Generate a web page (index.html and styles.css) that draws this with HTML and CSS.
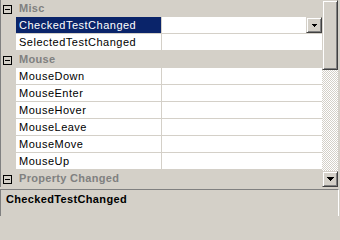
FILE: index.html
```html
<!DOCTYPE html>
<html>
<head>
<meta charset="utf-8">
<link rel="stylesheet" href="styles.css">
</head>
<body>
<div class="pane">
  <div class="grid">
    <div class="rows">
      <div class="cat"><span class="box"><span class="minus"></span></span><span class="cat-label">Misc</span></div>
      <div class="row sel"><div class="name">CheckedTestChanged</div><div class="value"><span class="ddbtn"><svg width="5" height="3" viewBox="0 0 5 3" shape-rendering="crispEdges"><rect x="0" y="0" width="5" height="1" fill="#000"/><rect x="1" y="1" width="3" height="1" fill="#000"/><rect x="2" y="2" width="1" height="1" fill="#000"/></svg></span></div></div>
      <div class="row"><div class="name">SelectedTestChanged</div><div class="value"></div></div>
      <div class="cat"><span class="box"><span class="minus"></span></span><span class="cat-label">Mouse</span></div>
      <div class="row"><div class="name">MouseDown</div><div class="value"></div></div>
      <div class="row"><div class="name">MouseEnter</div><div class="value"></div></div>
      <div class="row"><div class="name">MouseHover</div><div class="value"></div></div>
      <div class="row"><div class="name">MouseLeave</div><div class="value"></div></div>
      <div class="row"><div class="name">MouseMove</div><div class="value"></div></div>
      <div class="row"><div class="name">MouseUp</div><div class="value"></div></div>
      <div class="cat"><span class="box"><span class="minus"></span></span><span class="cat-label">Property Changed</span></div>
    </div>
    <div class="scrollbar">
      <div class="thumb"></div>
      <div class="track"></div>
      <div class="sbtn"><svg width="7" height="4" viewBox="0 0 7 4" shape-rendering="crispEdges"><rect x="0" y="0" width="7" height="1" fill="#000"/><rect x="1" y="1" width="5" height="1" fill="#000"/><rect x="2" y="2" width="3" height="1" fill="#000"/><rect x="3" y="3" width="1" height="1" fill="#000"/></svg></div>
    </div>
  </div>
  <div class="desc">
    <div class="desc-title">CheckedTestChanged</div>
  </div>
</div>
</body>
</html>
```
FILE: styles.css
```css
html, body {
  margin: 0;
  padding: 0;
  background: #d4d0c8;
}
body {
  width: 340px;
  height: 216px;
  overflow: hidden;
  font-family: "Liberation Sans", Arial, sans-serif;
  font-size: 11px;
  color: #000;
}
.pane {
  display: flex;
  flex-direction: column;
  width: 340px;
}
.grid {
  display: flex;
  height: 187px;
  border-left: 1px solid #808080;
  padding-right: 2px;
}
.rows {
  width: 321px;
  display: flex;
  flex-direction: column;
}
.cat {
  height: 17px;
  display: flex;
  align-items: center;
  background: #d4d0c8;
}
.box {
  box-sizing: border-box;
  width: 9px;
  height: 9px;
  margin-left: 2px;
  margin-top: 1px;
  border: 1px solid #000;
  display: flex;
  align-items: center;
  justify-content: center;
}
.minus {
  width: 5px;
  height: 1px;
  background: #000;
}
.cat-label {
  margin-left: 7px;
  font-weight: bold;
  color: #808080;
  line-height: 17px;
  letter-spacing: 0.3px;
}
.row {
  display: flex;
  height: 16px;
  padding-left: 15px;
  border-bottom: 1px solid #d4d0c8;
  background: #d4d0c8;
}
.name {
  width: 142px;
  padding-left: 3px;
  background: #fff;
  border-right: 1px solid #d4d0c8;
  line-height: 16px;
  white-space: nowrap;
  overflow: hidden;
  letter-spacing: 0.5px;
}
.row.sel .name {
  background: #0a246a;
  color: #fff;
}
.value {
  flex: 1;
  background: #fff;
  display: flex;
  justify-content: flex-end;
}
.ddbtn, .sbtn {
  box-sizing: border-box;
  width: 16px;
  height: 16px;
  background: #d4d0c8;
  border: 1px solid;
  border-color: #d4d0c8 #404040 #404040 #d4d0c8;
  box-shadow: inset 1px 1px #fff, inset -1px -1px #808080;
  display: flex;
  align-items: center;
  justify-content: center;
}
.ddbtn svg, .sbtn svg {
  display: block;
}
.ddbtn svg {
  margin-top: 1px;
}
.scrollbar {
  width: 16px;
  display: flex;
  flex-direction: column;
}
.thumb {
  box-sizing: border-box;
  height: 70px;
  background: #d4d0c8;
  border: 1px solid;
  border-color: #d4d0c8 #404040 #404040 #d4d0c8;
  box-shadow: inset 1px 1px #fff, inset -1px -1px #808080;
}
.track {
  flex: 1;
  background: repeating-conic-gradient(#fff 0 25%, #d4d0c8 0 50%) 0 0 / 2px 2px;
}
.sbtn {
  flex: none;
}
.desc {
  margin-top: 2px;
  margin-right: 1px;
  height: 40px;
  border-top: 1px solid #808080;
  border-left: 1px solid #808080;
  border-right: 1px solid #fff;
  padding: 2px 5px;
}
.desc-title {
  font-weight: bold;
  line-height: 15px;
  letter-spacing: 0.35px;
}
```
